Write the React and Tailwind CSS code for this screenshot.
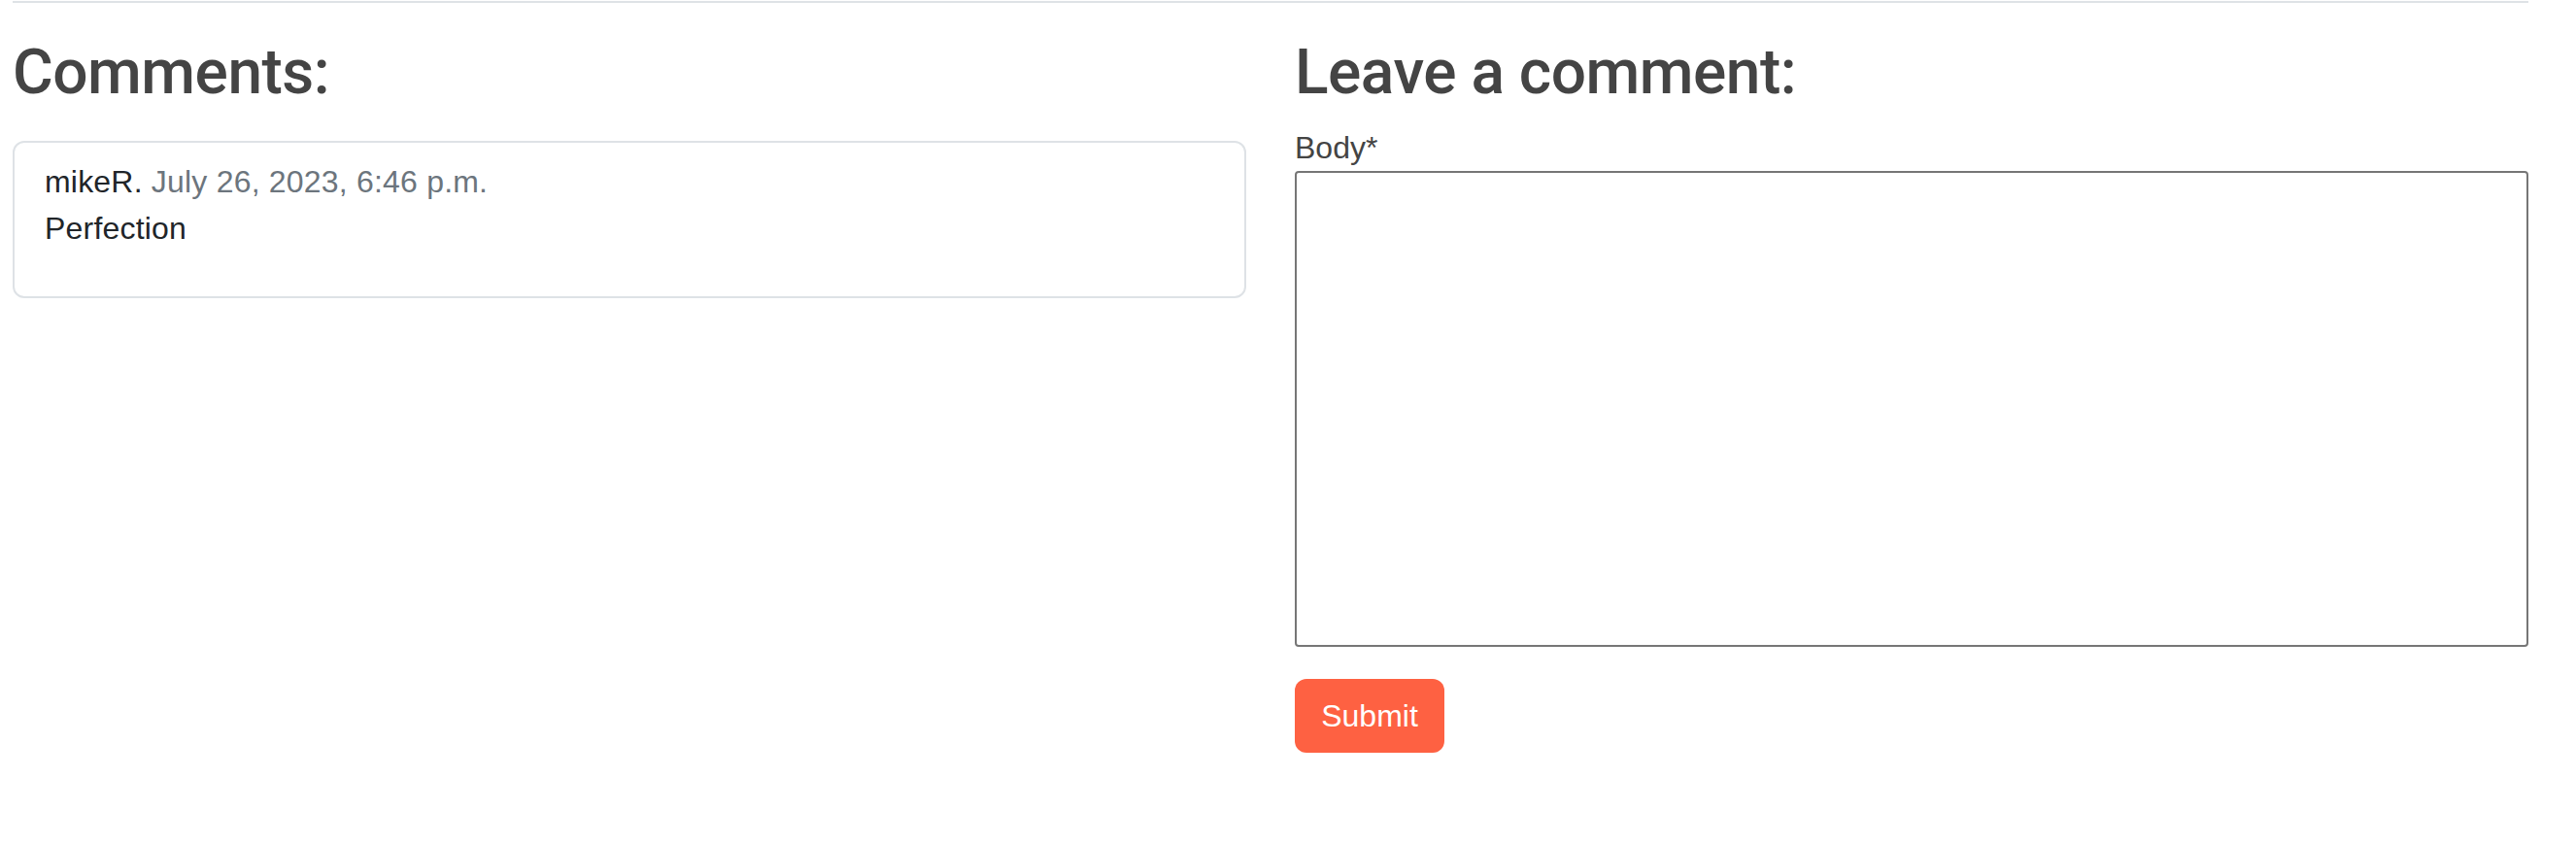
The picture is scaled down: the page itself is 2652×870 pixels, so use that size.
export default function App() {
  return (
    <div className="min-h-[870px] bg-white font-['Liberation_Sans',Arial,sans-serif]">
      <div className="ml-[13px] w-[2590px] pt-px">
        {/* Divider */}
        <div className="h-[2px] bg-[#dee2e6]" />

        <div className="mt-[34px] flex gap-[50px]">
          {/* Comments list */}
          <section className="w-[1270px]">
            <h2 className="font-['Roboto',Arial,sans-serif] text-[64px] leading-[1.2] font-medium tracking-[-0.5px] text-[#444]">
              Comments:
            </h2>
            <div className="mt-[31px] rounded-[12px] border-2 border-[#dee2e6] px-[31px] pt-[16px] pb-[46px] text-[32px] leading-[48px] tracking-[0.2px] text-[#212529]">
              <p>
                mikeR. <span className="text-[#6c757d]">July 26, 2023, 6:46 p.m.</span>
              </p>
              <p>Perfection</p>
            </div>
          </section>

          {/* Comment form */}
          <section className="w-[1270px]">
            <h2 className="font-['Roboto',Arial,sans-serif] text-[64px] leading-[1.2] font-medium tracking-[-0.5px] text-[#444]">
              Leave a comment:
            </h2>
            <form className="mt-[14px]" onSubmit={(e) => e.preventDefault()}>
              <label htmlFor="id_body" className="block text-[32px] leading-[48px] text-[#444]">
                Body*
              </label>
              <textarea
                id="id_body"
                className="block h-[490px] w-full resize-none rounded-[4px] border-2 border-[#767676] bg-white outline-none"
              />
              <button
                type="submit"
                className="mt-[33px] flex h-[76px] w-[154px] items-center justify-center rounded-[12px] bg-[#fe6142] text-[32px] leading-[48px] text-white"
              >
                Submit
              </button>
            </form>
          </section>
        </div>
      </div>
    </div>
  );
}
